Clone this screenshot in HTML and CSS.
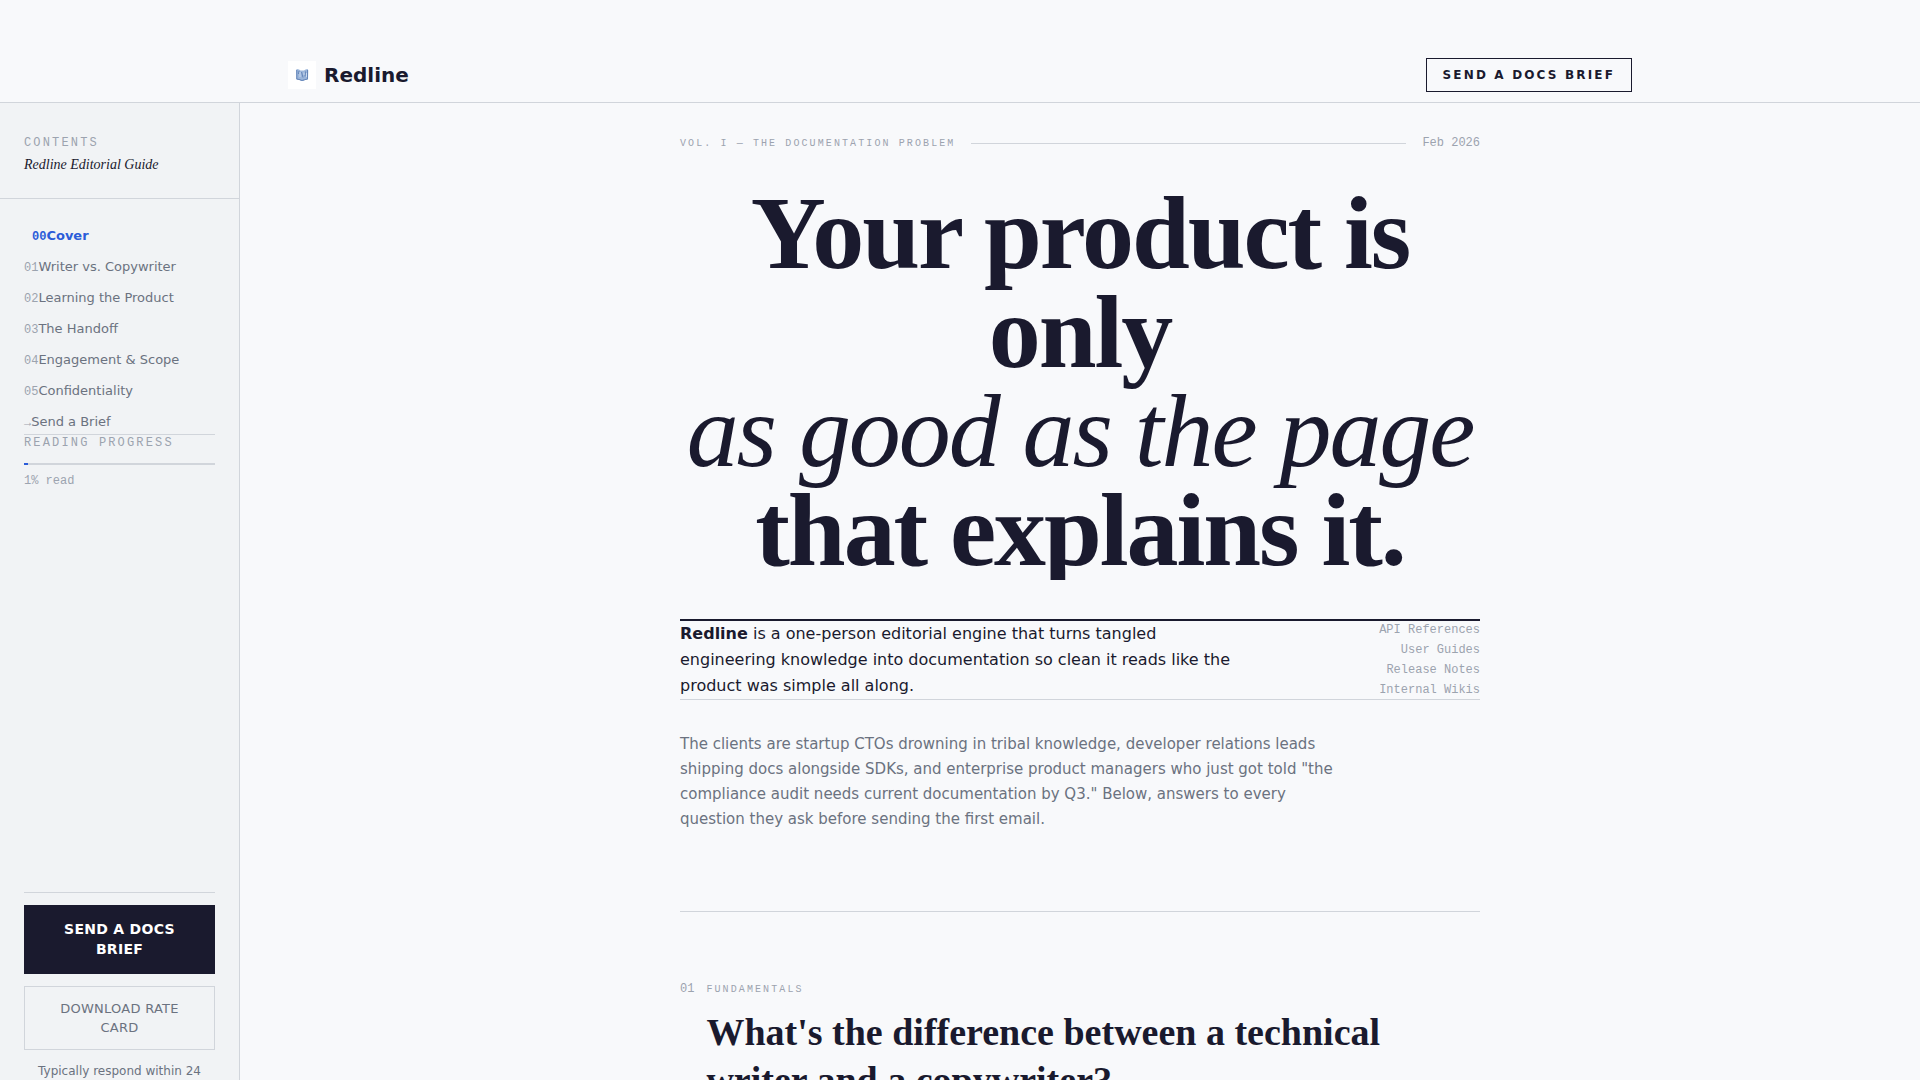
FILE: index.html
```
<!DOCTYPE html>
<html lang="en">
<head>
    <meta charset="UTF-8">
    <meta name="viewport" content="width=device-width, initial-scale=1.0">
    <title>Redline Editorial Guide</title>
    <link rel="stylesheet" href="styles.css">
</head>
<body>
    <header class="site-header">
        <a class="brand" href="#cover">
            <span class="brand-mark">
                <svg viewBox="0 0 28 28" width="28" height="28" aria-hidden="true">
                    <path d="M8 9.500 L8.800 8 L11 8.600 L12.500 9.400 H16 L17.600 8.400 L19.600 8 L20.300 9.500 L20 18.500 L17 19 L15.500 20 H13 L11.500 19 L8.300 18.500 Z" fill="#9bb5da"/>
                    <path d="M8.800 9 V18 L12 18.700 L14 19.500 L16.500 18.700 L19.500 18 V9 M11 10 L10.500 13 M13.500 11 L15 16.500 M17.500 10.500 L17 15.500" fill="none" stroke="#6485b8" stroke-width="1"/>
                    <path d="M12 11 V16 M16 11.500 V14 M18.500 12 V16" fill="none" stroke="#c9d8ed" stroke-width="1"/>
                </svg>
            </span>
            <span class="brand-name">Redline</span>
        </a>
        <a class="header-cta" href="#brief">Send a Docs Brief</a>
    </header>

    <div class="layout">
        <!-- Contents sidebar -->
        <aside class="sidebar">
            <div class="sidebar-head">
                <p class="label">Contents</p>
                <p class="guide-title">Redline Editorial Guide</p>
            </div>
            <nav class="toc">
                <a class="active" href="#cover"><span class="num">00</span>Cover</a>
                <a href="#fundamentals"><span class="num">01</span>Writer vs. Copywriter</a>
                <a href="#learning"><span class="num">02</span>Learning the Product</a>
                <a href="#handoff"><span class="num">03</span>The Handoff</a>
                <a href="#scope"><span class="num">04</span>Engagement &amp; Scope</a>
                <a href="#confidentiality"><span class="num">05</span>Confidentiality</a>
                <a href="#brief"><span class="num">→</span>Send a Brief</a>
            </nav>
            <div class="progress">
                <p class="label">Reading Progress</p>
                <div class="progress-track"><div class="progress-fill"></div></div>
                <p class="progress-text">1% read</p>
            </div>
            <div class="sidebar-cta">
                <a class="btn-primary" href="#brief">Send a Docs Brief</a>
                <a class="btn-secondary" href="#rates">Download Rate Card</a>
                <p class="note">Typically respond within 24 hours</p>
            </div>
        </aside>

        <main class="content">
            <!-- Cover -->
            <section class="cover" id="cover">
                <div class="cover-meta">
                    <span class="kicker">Vol. I — The Documentation Problem</span>
                    <span class="rule"></span>
                    <span class="date">Feb 2026</span>
                </div>
                <h1>Your product is only<br><em>as good as the page</em><br>that explains it.</h1>
                <div class="intro">
                    <p class="lede"><strong>Redline</strong> is a one-person editorial engine that turns tangled engineering knowledge into documentation so clean it reads like the product was simple all along.</p>
                    <ul class="services">
                        <li>API References</li>
                        <li>User Guides</li>
                        <li>Release Notes</li>
                        <li>Internal Wikis</li>
                    </ul>
                </div>
                <p class="clients">The clients are startup CTOs drowning in tribal knowledge, developer relations leads shipping docs alongside SDKs, and enterprise product managers who just got told "the compliance audit needs current documentation by Q3." Below, answers to every question they ask before sending the first email.</p>
            </section>

            <!-- Question 01 -->
            <section class="question" id="fundamentals">
                <span class="num">01</span>
                <div>
                    <p class="kicker">Fundamentals</p>
                    <h2>What's the difference between a technical writer and a copywriter?</h2>
                </div>
            </section>
        </main>
    </div>
</body>
</html>
```
FILE: styles.css
```
:root {
    --ink: #1a1a2e;
    --muted: #6b7280;
    --faint: #9ca3af;
    --line: #d1d5db;
    --accent: #2b5cd9;
    --background: #f8f9fb;
    --panel: #f1f3f5;
    --sans: "DejaVu Sans", sans-serif;
    --serif: "Liberation Serif", serif;
    --mono: "Liberation Mono", monospace;
}

* {
    box-sizing: border-box;
    margin: 0;
    padding: 0;
}

body {
    height: 100vh;
    overflow: hidden;
    display: flex;
    flex-direction: column;
    font-family: var(--sans);
    background: var(--background);
    color: var(--ink);
}

a {
    color: inherit;
    text-decoration: none;
}

.site-header {
    flex-shrink: 0;
    display: flex;
    justify-content: space-between;
    align-items: center;
    padding: 58px 15% 10px;
    border-bottom: 1px solid var(--line);
}

.brand {
    display: flex;
    align-items: center;
    gap: 8px;
}

.brand-mark {
    display: flex;
    background: white;
}

.brand-name {
    font-size: 20px;
    line-height: 28px;
    font-weight: 700;
}

.header-cta {
    padding: 8px 16px;
    border: 1px solid var(--ink);
    font-size: 12px;
    line-height: 16px;
    font-weight: 700;
    letter-spacing: 0.18em;
    text-transform: uppercase;
}

.layout {
    flex: 1;
    min-height: 0;
    display: grid;
    grid-template-columns: 240px 1fr;
}

/* Sidebar */
.sidebar {
    min-height: 0;
    display: flex;
    flex-direction: column;
    background: var(--panel);
    border-right: 1px solid var(--line);
}

.sidebar-head {
    padding: 32px 24px 23px;
    border-bottom: 1px solid var(--line);
}

.label {
    font-family: var(--mono);
    font-size: 12px;
    line-height: 16px;
    letter-spacing: 0.18em;
    text-transform: uppercase;
    color: var(--faint);
}

.guide-title {
    margin-top: 4px;
    font-family: var(--serif);
    font-size: 14px;
    line-height: 20px;
    font-style: italic;
}

.toc {
    display: flex;
    flex-direction: column;
    gap: 10px;
    padding: 26px 24px 0;
    font-size: 13px;
    line-height: 21px;
    color: var(--muted);
}

.toc .active {
    padding-left: 8px;
    font-weight: 700;
    color: var(--accent);
}

.num {
    font-family: var(--mono);
    font-size: 12px;
    line-height: 12px;
    color: var(--faint);
}

.toc .active .num {
    color: inherit;
}

.progress {
    margin: 2px 24px 0;
    border-top: 1px solid var(--line);
}

.progress-track {
    margin: 12px 0 8px;
    height: 2px;
    background: var(--line);
}

.progress-fill {
    width: 2%;
    height: 100%;
    background: var(--accent);
}

.progress-text {
    font-family: var(--mono);
    font-size: 12px;
    line-height: 16px;
    color: var(--faint);
}

.sidebar-cta {
    display: flex;
    flex-direction: column;
    gap: 12px;
    margin: auto 24px -20px;
    padding-top: 12px;
    border-top: 1px solid var(--line);
    text-align: center;
}

.btn-primary,
.btn-secondary {
    text-transform: uppercase;
    letter-spacing: 0.02em;
}

.btn-primary {
    padding: 14px 24px 15px;
    background: var(--ink);
    color: white;
    font-size: 14px;
    line-height: 20px;
    font-weight: 700;
}

.btn-secondary {
    padding: 12px 24px;
    border: 1px solid var(--line);
    font-size: 13px;
    line-height: 19px;
    color: var(--muted);
}

.note {
    font-size: 12px;
    line-height: 19px;
    color: var(--muted);
}

/* Content */
.content {
    min-height: 0;
    overflow: hidden;
    padding: 32px 48px 0;
}

.cover,
.question {
    max-width: 800px;
    margin: 0 auto;
}

.cover-meta {
    display: flex;
    align-items: center;
    gap: 16px;
}

.kicker {
    font-family: var(--mono);
    font-size: 10px;
    line-height: 16px;
    letter-spacing: 0.21em;
    text-transform: uppercase;
    color: var(--faint);
}

.rule {
    flex: 1;
    height: 1px;
    background: var(--line);
}

.date {
    font-family: var(--mono);
    font-size: 12px;
    line-height: 17px;
    color: var(--faint);
}

h1 {
    margin: 31px 0 39px;
    padding-bottom: 1px;
    overflow: hidden;
    font-family: var(--serif);
    font-size: 104px;
    line-height: 99px;
    font-weight: 700;
    letter-spacing: -0.02em;
    text-align: center;
}

h1 em {
    font-weight: 400;
}

.intro {
    display: flex;
    justify-content: space-between;
    border-top: 2px solid var(--ink);
    border-bottom: 1px solid var(--line);
}

.lede {
    max-width: 560px;
    font-size: 16px;
    line-height: 26px;
}

.services {
    margin: -1px 0;
    list-style: none;
    font-family: var(--mono);
    font-size: 12px;
    line-height: 20px;
    text-align: right;
    color: var(--faint);
}

.clients {
    max-width: 664px;
    margin-top: 32px;
    padding-bottom: 79px;
    font-size: 15px;
    line-height: 25px;
    color: var(--muted);
}

.question {
    display: flex;
    gap: 12px;
    padding-top: 70px;
    border-top: 1px solid var(--line);
}

.question .num {
    line-height: 14px;
}

h2 {
    margin-top: 10px;
    font-family: var(--serif);
    font-size: 38px;
    line-height: 48px;
    font-weight: 700;
}
```
